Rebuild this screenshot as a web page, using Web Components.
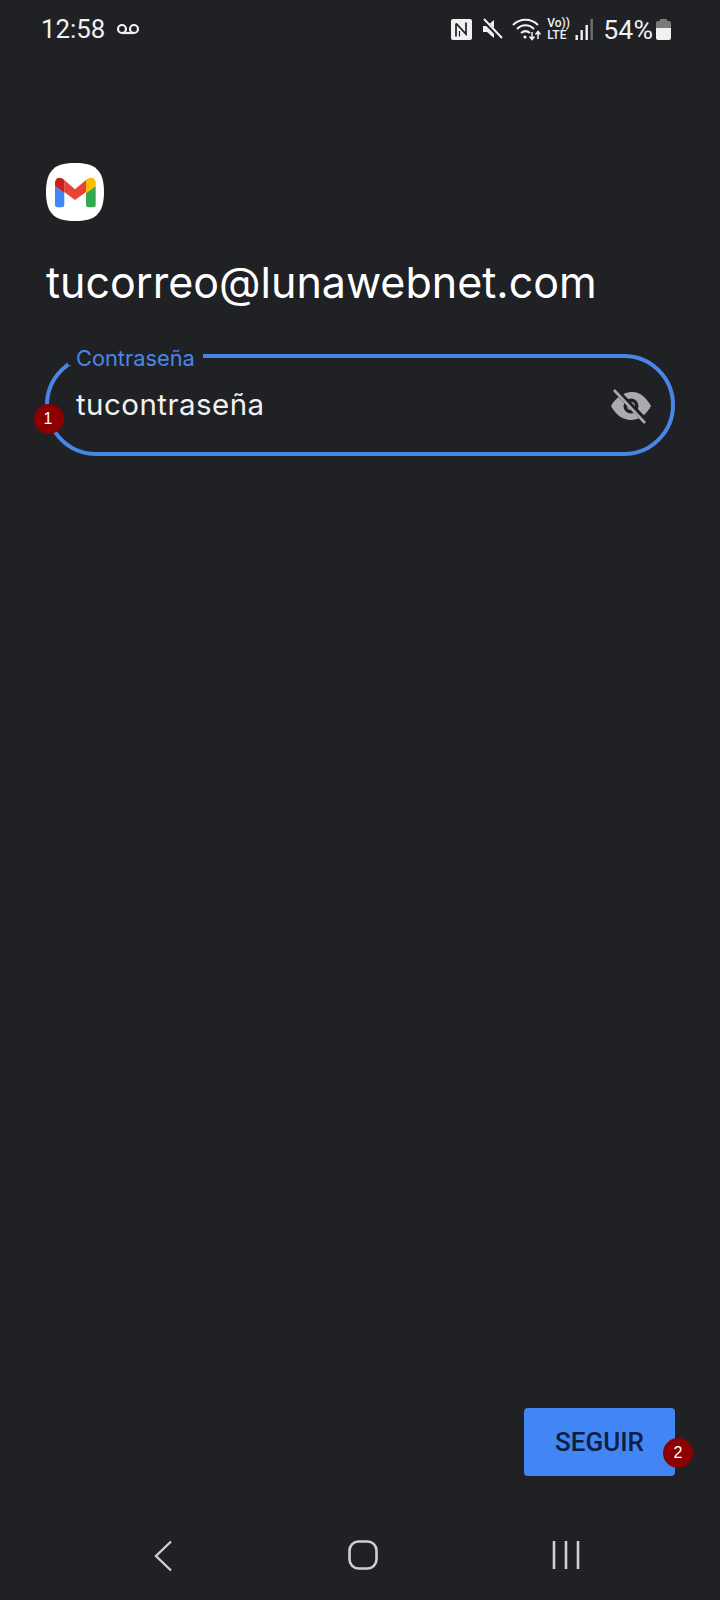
<!DOCTYPE html>
<html><head><meta charset="utf-8"><style>
html,body{margin:0;padding:0;background:#202125}
</style></head><body>
<login-screen></login-screen>
<script>
function def(name, html){
  customElements.define(name, class extends HTMLElement{
    constructor(){super();this.attachShadow({mode:'open'}).innerHTML=html;}
  });
}
def('status-bar',`<style>
:host{display:flex;align-items:center;height:60px;box-sizing:border-box;padding:0 49px 2px 41px;color:#f1f1f1;font-family:Roboto,sans-serif;font-size:25.8px}
.vm{margin-left:11px;display:block}
.sp{flex:1}
.r{display:flex;align-items:center}
.r svg{display:block}
.vl{display:flex;flex-direction:column;font:500 12px/12px Roboto,sans-serif;width:21px;margin-left:5px;align-items:flex-start}
.pct{margin-left:8px;font-size:26.6px;letter-spacing:.1px}
</style>
<span class="time">12:58</span>
<svg class="vm" width="24" height="12" viewBox="0 0 24 12" fill="none" stroke="#f1f1f1" stroke-width="2.2"><circle cx="6" cy="6" r="4"/><circle cx="18" cy="6" r="4"/><path d="M6 10h12"/></svg>
<span class="sp"></span>
<div class="r">
<svg width="21" height="21" viewBox="0 0 21 21"><rect width="21" height="21" rx="2" fill="#f1f1f1"/><path d="M5 17.500V5.500q0-1 1-.2L15 15V3.500" stroke="#202125" stroke-width="1.700" fill="none"/><path d="M8.500 17.500V12" stroke="#202125" stroke-width="1.200"/></svg>
<svg style="margin-left:10px" width="21" height="22" viewBox="0 0 21 22"><path d="M1 8h4l7-6v18l-7-6H1z" fill="#f1f1f1"/><path d="M1 2l18 18" stroke="#202125" stroke-width="4"/><path d="M2 1l18 19" stroke="#f1f1f1" stroke-width="2"/></svg>
<svg style="margin-left:9px" width="30" height="24" viewBox="0 0 30 24" fill="none" stroke="#f1f1f1" stroke-width="2"><path d="M1 8c7-7 18-7 25 0M5 12c5-5 12-5 17 0M9 16c3-2.500 6-2.500 9 0"/><circle cx="13" cy="20" r="1.600" fill="#f1f1f1" stroke="none"/><path d="M20 15v7M17.500 19.500l2.500 3 2.500-3M26 22v-7M23.500 17.500l2.500-3 2.500 3" stroke-width="1.500"/></svg>
<div class="vl"><span>Vo))</span><span>LTE</span></div>
<svg style="margin-left:7px" width="20" height="21" viewBox="0 0 20 21"><rect x=".5" y="16" width="2.400" height="5" fill="#f1f1f1"/><rect x="5.500" y="11" width="2.400" height="10" fill="#f1f1f1"/><rect x="10.500" y="6" width="2.400" height="15" fill="#f1f1f1"/><rect x="15.500" y="0" width="2.400" height="21" fill="#6f6f6f"/></svg>
<span class="pct">54%</span>
<svg style="margin-left:3px" width="15" height="21" viewBox="0 0 15 21"><path d="M4 0h7v2h2a2 2 0 0 1 2 2v5H0V4a2 2 0 0 1 2-2h2z" fill="#7b7b7b"/><path d="M0 9h15v10a2 2 0 0 1-2 2H2a2 2 0 0 1-2-2z" fill="#f1f1f1"/></svg>
</div>`);
def('gmail-logo',`<style>:host{display:block;width:58px;height:58px;margin-left:1px}svg{display:block}</style>
<svg width="58" height="58" viewBox="0 0 58 58">
<path d="M29 0C48 0 58 6 58 29S48 58 29 58 0 52 0 29 10 0 29 0z" fill="#fff"/>
<path d="M9 23V42a2.300 2.300 0 0 0 2.300 2.300h4.700a2.300 2.300 0 0 0 2.300-2.300V30z" fill="#4285f4"/>
<path d="M49.700 23V42a2.300 2.300 0 0 1-2.300 2.300h-5.100a2.300 2.300 0 0 1-2.300-2.300V30z" fill="#34a853"/>
<path d="M18.300 17L29 26.300 40 17v12L29 37 18.300 29z" fill="#ea4335"/>
<path d="M9 19.500c0-4.500 5-7 9.300-2.500V30L9 23z" fill="#c5221f"/>
<path d="M49.700 19.500c0-4.500-5-7-9.700-2.500V30l9.700-7z" fill="#fbbc04"/>
</svg>`);
def('password-field',`<style>
:host{display:block;position:relative;box-sizing:border-box;width:630px;height:102px;border:4px solid #4a86e8;border-radius:51px;color:#f1f1f1;font-family:Inter,sans-serif}
.lab{position:absolute;left:19px;top:-13px;background:#202125;padding:0 8px;height:20px;line-height:26px;font-size:21.8px;color:#4a86e8}
.in{display:flex;align-items:center;height:100%;padding:0 18px 2px 27px;box-sizing:border-box;font-size:29.5px;letter-spacing:.45px}
.t{flex:1}
svg{display:block;margin-top:4px}
</style>
<span class="lab">Contraseña</span>
<div class="in"><span class="t">tucontraseña</span>
<svg width="44" height="38" viewBox="0 0 44 38"><path d="M2 19C7 10 14 6 22 5s15 5 20 14c-5 9-12 14-20 14S7 28 2 19z" fill="#a9abad"/><circle cx="22" cy="19" r="7.500" fill="#202125"/><circle cx="22" cy="19" r="4" fill="#a9abad"/><path d="M6 2.500l32 33" stroke="#202125" stroke-width="5.500"/><path d="M5 3l31 33" stroke="#a9abad" stroke-width="2.600"/></svg></div>`);
def('num-badge',`<style>
:host{position:absolute;display:flex;align-items:center;justify-content:center;width:30px;height:30px;border-radius:50%;background:#8b0000;color:#fff;font:16px "Liberation Sans",sans-serif}
</style><slot></slot>`);
def('nav-bar',`<style>
:host{display:flex;height:88px;background:#202125;border-top:1px solid #1e1f23;box-sizing:border-box;align-items:flex-start;justify-content:space-between;padding:27px 140px 0 153px}
svg{display:block}
</style>
<svg width="20" height="32" viewBox="0 0 20 32" fill="none" stroke="#cfcfcf" stroke-width="2.400"><path d="M18 1.500L3 16l15 14.500"/></svg>
<svg width="30" height="30" viewBox="0 0 30 30" fill="none" stroke="#cfcfcf" stroke-width="2.600"><rect x="1.500" y="1.500" width="27" height="27" rx="9"/></svg>
<svg width="28" height="30" viewBox="0 0 28 30" fill="none" stroke="#cfcfcf" stroke-width="2.600"><path d="M2 1v28M14 1v28M26 1v28"/></svg>`);
def('login-screen',`<style>
:host{display:flex;flex-direction:column;position:relative;width:720px;height:1600px;background:#202125;color:#f1f1f1;overflow:hidden}
.main{flex:1;display:flex;flex-direction:column;padding:103px 45px 0 45px}
h1{margin:35px 0 0 1px;font:400 43px/52px Inter,sans-serif;color:#fff;white-space:nowrap}
password-field{margin-top:46px}
.foot{margin:auto 0 36px;display:flex;justify-content:flex-end}
button{width:151px;height:68px;border:0;border-radius:4px;background:#4285f4;color:#0c1f3f;font:500 26px Roboto,sans-serif;padding:0;position:relative}
.b1{left:34px;top:404px;padding-right:2px;box-sizing:content-box;width:28px}
.b2{left:663px;top:1438px}
</style>
<status-bar></status-bar>
<div class="main">
<gmail-logo></gmail-logo>
<h1>tucorreo@lunawebnet.com</h1>
<password-field></password-field>
<div class="foot"><button>SEGUIR</button></div>
</div>
<nav-bar></nav-bar>
<num-badge class="b1">1</num-badge>
<num-badge class="b2">2</num-badge>`);
</script>
</body></html>
